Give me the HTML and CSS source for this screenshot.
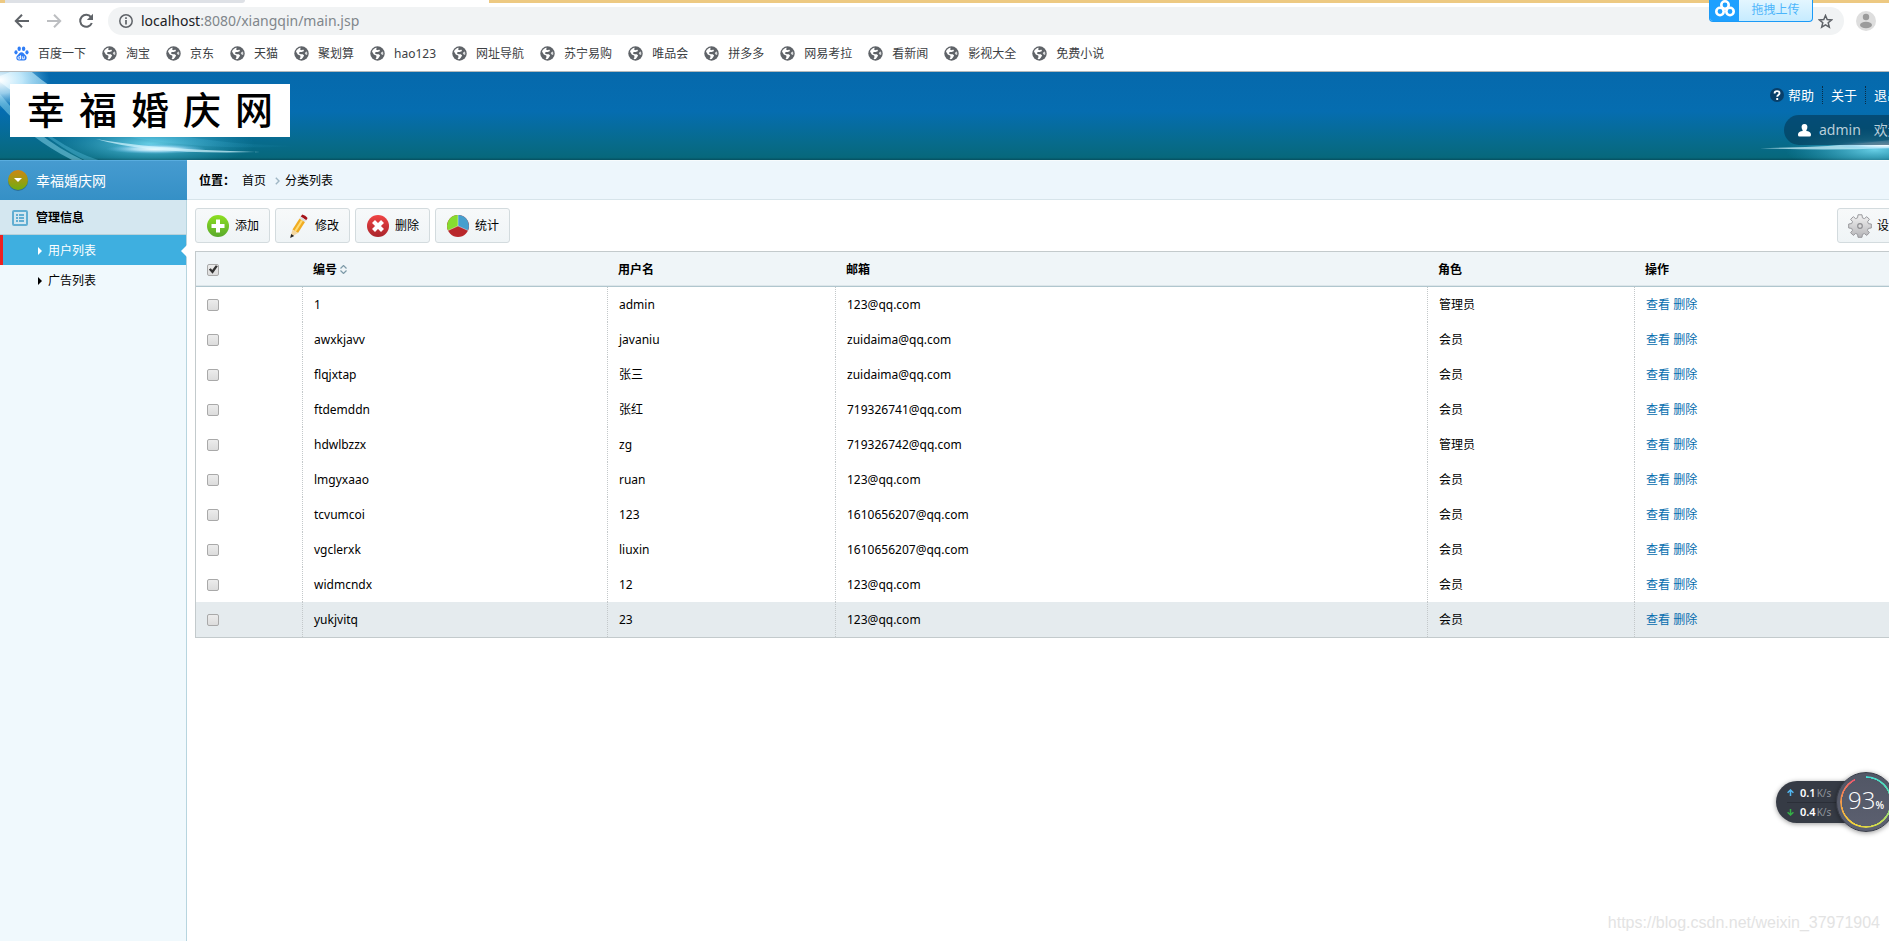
FILE: index.html
```html
<!DOCTYPE html>
<html lang="zh-CN">
<head>
<meta charset="utf-8">
<title>幸福婚庆网</title>
<link rel="stylesheet" href="styles.css">
<script src="main.js" defer></script>
</head>
<body>
<svg class="defs" aria-hidden="true">
  <symbol id="globe" viewBox="0 0 15 15">
    <circle cx="7.500" cy="7.500" r="7.200" fill="#5f6368"/>
    <path d="M2 5.600C2.800 3.400 4.600 2 6.800 1.800L6 3.600l1.800.6 1.400-.6.900 1.300-2.300 1L5.600 6l-.7 1.600 1.900.6 2 .1 1.300 1.300-1 1.600-1.300 1.800c-.8.2-1.500.2-2.200 0l.9-1.900-.3-1.700-2.400-.9z" fill="#fff"/>
    <path d="M12.900 5.500l-1.600.7-.5 1.500 1.300 1.100 1 .1c.4-1.200.3-2.300-.2-3.400z" fill="#fff" opacity=".75"/>
  </symbol>
  <symbol id="lens" viewBox="0 0 300 88">
    <path d="M-5 6C50 52 140 82 300 74C160 72 80 44 25-6z" fill="url(#streak)"/>
    <path d="M0 22Q38 70 92 92L80 92Q26 66-6 26z" fill="#8fdcf0" opacity=".5"/>
    <path d="M15 32Q56 78 112 92L92 92Q40 66 8 28z" fill="#5fc4e0" opacity=".4"/>
    <ellipse cx="0" cy="8" rx="50" ry="30" fill="url(#glow)"/>
    <ellipse cx="150" cy="72" rx="105" ry="24" fill="url(#flare)"/>
    <ellipse cx="156" cy="77" rx="50" ry="5" fill="url(#glow)"/>
    <path d="M96 67Q150 77 260 80Q150 83 96 67z" fill="#d6f7ff" opacity=".7"/>
  </symbol>
  <symbol id="lens-end" viewBox="0 0 170 88">
    <ellipse cx="125" cy="78" rx="90" ry="22" fill="url(#flare)"/>
    <path d="M10 76Q90 76 170 64V74Q90 80 10 76z" fill="#d6f7ff" opacity=".7"/>
    <ellipse cx="135" cy="73" rx="50" ry="5" fill="url(#glow)"/>
  </symbol>
  <defs>
    <radialGradient id="glow"><stop offset="0" stop-color="#fff"/><stop offset=".45" stop-color="#c9eeff" stop-opacity=".75"/><stop offset="1" stop-color="#5cb8ea" stop-opacity="0"/></radialGradient>
    <radialGradient id="flare"><stop offset="0" stop-color="#71d9ef" stop-opacity=".9"/><stop offset="1" stop-color="#2da0c4" stop-opacity="0"/></radialGradient>
    <linearGradient id="streak"><stop offset="0" stop-color="#e8f8ff" stop-opacity=".9"/><stop offset=".4" stop-color="#43b0dc" stop-opacity=".5"/><stop offset="1" stop-color="#2da0c4" stop-opacity="0"/></linearGradient>
    <linearGradient id="green" x2="0" y2="1"><stop offset="0" stop-color="#8ddf21"/><stop offset="1" stop-color="#59a92c"/></linearGradient>
    <linearGradient id="red" x2="0" y2="1"><stop offset="0" stop-color="#f04444"/><stop offset="1" stop-color="#a9242b"/></linearGradient>
    <linearGradient id="steel" x2="0" y2="1"><stop offset="0" stop-color="#f3f3f3"/><stop offset="1" stop-color="#b5b5b8"/></linearGradient>
    <linearGradient id="orb" x2="0" y2="1"><stop offset="0" stop-color="#cf8613"/><stop offset="1" stop-color="#6fae12"/></linearGradient>
  </defs>
</svg>

<header class="browser">
  <div class="tabs"><span class="tab tab-idle"></span><span class="tab tab-active"></span></div>
  <div class="toolbar">
    <button class="nav" aria-label="后退"><svg width="16" height="16" viewBox="0 0 16 16"><path d="M15 8H2.500M8 1.800L1.800 8 8 14.200" fill="none" stroke="#5f6368" stroke-width="2"/></svg></button>
    <button class="nav" aria-label="前进"><svg width="16" height="16" viewBox="0 0 16 16"><path d="M1 8h12.500M8 1.800L14.200 8 8 14.200" fill="none" stroke="#bcbec1" stroke-width="2"/></svg></button>
    <button class="nav" aria-label="刷新"><svg width="16" height="16" viewBox="0 0 16 16"><path d="M13 4.200A6 6 0 1 0 13.800 10" fill="none" stroke="#5f6368" stroke-width="2"/><path d="M15 .8V7H8.800z" fill="#5f6368"/></svg></button>
    <div class="omnibox">
      <svg width="14" height="14" viewBox="0 0 14 14"><circle cx="7" cy="7" r="6.200" fill="none" stroke="#5f6368" stroke-width="1.500"/><path d="M7 6v4.500M7 3.300v1.700" stroke="#5f6368" stroke-width="1.700"/></svg>
      <span class="url"><b>localhost</b>:8080/xiangqin/main.jsp</span>
      <button class="nav" aria-label="收藏"><svg width="15" height="15" viewBox="0 0 15 15"><path d="M7.500 1.500l1.700 4.100 4.400.3-3.400 2.900 1.100 4.300-3.800-2.300-3.800 2.300 1.100-4.300L1.400 5.900l4.400-.3z" fill="none" stroke="#5f6368" stroke-width="1.500"/></svg></button>
    </div>
    <button class="nav avatar" aria-label="用户"><svg width="20" height="20" viewBox="0 0 20 20"><circle cx="10" cy="10" r="10" fill="#dedede"/><circle cx="10" cy="6" r="3.200" fill="#9b9b9b"/><ellipse cx="10" cy="14" rx="6" ry="3.200" fill="#9b9b9b"/></svg></button>
  </div>
  <nav class="bookmarks">
    <a href="#"><svg width="15" height="15" viewBox="0 0 15 15" fill="#2f7df6"><ellipse cx="5.200" cy="2.800" rx="1.700" ry="2.300"/><ellipse cx="9.600" cy="2.800" rx="1.700" ry="2.300"/><ellipse cx="2" cy="6.300" rx="1.600" ry="2.100"/><ellipse cx="13" cy="6.300" rx="1.600" ry="2.100"/><path d="M7.500 6.200c2 0 2.500 1.700 4 3.100 2 1.900 1.300 5.200-1.300 5.200H4.800c-2.600 0-3.300-3.300-1.300-5.200 1.500-1.400 2-3.100 4-3.100z"/><path d="M6.500 9.300v3.700H5a1 1 0 0 1 0-2.200h1.500M8.300 10.300v2.500h2v-2.500" fill="none" stroke="#fff" stroke-width=".9"/></svg>百度一下</a>
  </nav>
  <div class="upload"><span class="upload-mark"><svg width="20" height="17" viewBox="0 0 20 17" fill="none" stroke="#fff" stroke-width="2.600"><circle cx="10" cy="5" r="3.700"/><circle cx="5" cy="11.500" r="3.700"/><circle cx="15" cy="11.500" r="3.700"/></svg></span><span class="upload-text">拖拽上传</span></div>
</header>

<div class="page">
  <header class="banner">
    <svg class="lens lens-left"><use href="#lens"/></svg>
    <svg class="lens lens-right"><use href="#lens-end"/></svg>
    <h1 class="logo"><span>幸</span><span>福</span><span>婚</span><span>庆</span><span>网</span></h1>
    <div class="account">
      <ul class="links">
        <li><a href="#"><svg width="14" height="14" viewBox="0 0 14 14"><circle cx="7" cy="7" r="7" fill="#083f69"/><path d="M4.600 5.400C4.600 2.300 9.500 2.400 9.500 5.200 9.500 6.900 7.200 7 7.200 8.800M7.200 10v2" fill="none" stroke="#fff" stroke-width="1.900"/></svg>帮助</a></li>
        <li><a href="#">关于</a></li>
        <li><a href="#">退出</a></li>
      </ul>
      <div class="user"><svg width="13" height="13" viewBox="0 0 13 13" fill="#fff"><path d="M6.500 0C9 0 9.700 2 9.300 4 9 5.300 8.400 6 8.300 7c2.500.2 4.700 1 4.700 3.500V11q0 1.500-1.500 1.500h-10Q0 12.500 0 11v-.5C0 8 2.200 7.200 4.700 7c-.1-1-.7-1.700-1-3C3.300 2 4 0 6.500 0z"/></svg><span>admin</span><span>欢迎</span></div>
    </div>
  </header>

  <div class="body">
    <aside class="sidebar">
      <div class="side-top"><svg width="20" height="21" viewBox="0 0 20 21"><circle cx="10" cy="11" r="10" fill="#2c6f96"/><circle cx="10" cy="10" r="10" fill="url(#orb)"/><path d="M6 8h8l-4 4z" fill="#fff"/></svg>幸福婚庆网</div>
      <div class="side-title"><svg width="16" height="16" viewBox="0 0 16 16"><rect x="1" y="1" width="14" height="14" rx="1" fill="none" stroke="#62aed2" stroke-width="2"/><path d="M4 5h2M4 8h2M4 11h2M7 5h5M7 8h5M7 11h5" stroke="#62aed2" stroke-width="2"/></svg>管理信息</div>
      <nav class="menu">
        <a class="active" href="#">用户列表</a>
        <a href="#">广告列表</a>
      </nav>
    </aside>

    <main class="content">
      <div class="place"><b>位置：</b><a href="#">首页</a><svg width="5" height="8" viewBox="0 0 5 8"><path d="M.8.8L4 4 .8 7.200" fill="none" stroke="#9fb6c4" stroke-width="1.400"/></svg><a href="#">分类列表</a></div>
      <div class="tools">
        <button><svg width="24" height="24" viewBox="0 0 24 24"><circle cx="12" cy="12" r="11" fill="url(#green)"/><path d="M12 5.500v13M5.500 12h13" stroke="#fff" stroke-width="4"/></svg>添加</button>
        <button><svg width="24" height="24" viewBox="0 0 24 24"><path d="M13.500 4.500l5.500 3.600-7 11-5.500-3.600z" fill="#f0ac22"/><path d="M16 6.500L9.300 17" stroke="#ffdc73" stroke-width="2"/><path d="M14.700 2.600l5.500 3.600L21.600 4Q19.500 1.200 16.300.4z" fill="#a51219"/><path d="M13.500 4.500l5.500 3.600 1.200-1.900-5.500-3.600z" fill="#dcdcdc"/><path d="M6.500 15.500l5.500 3.600-6.800 3.900-.7-.4z" fill="#f3d7a2"/><path d="M5.200 20l3 1.900-4 2.100z" fill="#222"/></svg>修改</button>
        <button><svg width="24" height="24" viewBox="0 0 24 24"><circle cx="12" cy="12" r="11" fill="url(#red)"/><path d="M7.500 7.500l9 9M16.500 7.500l-9 9" stroke="#fff" stroke-width="4.200"/></svg>删除</button>
        <button><svg width="24" height="24" viewBox="0 0 24 24"><circle cx="12" cy="12" r="11" fill="#b9272b"/><path d="M12 12V1A11 11 0 0 0 2 16.500z" fill="#86dc2f"/><path d="M12 12V1A11 11 0 0 1 22 16.500z" fill="#469fce"/><path d="M12 1v11M12 12L2 16.500M12 12l10 4.500" stroke="#fff" stroke-opacity=".4"/></svg>统计</button>
        <button class="settings"><svg width="24" height="24" viewBox="0 0 24 24"><path d="M10 .8h4l.4 3 2 .8 2.400-1.900 2.600 2.600-1.800 2.400.8 2 2.900.3v4l-3 .4-.8 2 1.900 2.400-2.700 2.600-2.300-1.800-2 .8-.4 2.900h-4l-.4-3-2-.8-2.300 1.900-2.700-2.700 1.900-2.300-.8-2-3-.4v-4l3-.4.8-2-1.900-2.300 2.700-2.600L7.600 4.600l2-.8z" fill="url(#steel)" stroke="#98989c"/><circle cx="12" cy="12" r="2.300" fill="#ddd" stroke="#8e8e92" stroke-width="1.200"/></svg>设置</button>
      </div>
      <table class="list">
        <colgroup><col class="c-check"><col class="c-id"><col class="c-name"><col><col class="c-role"><col class="c-ops"></colgroup>
        <thead><tr><th><input type="checkbox" checked aria-label="全选"></th><th>编号<svg class="sort" width="7" height="9" viewBox="0 0 7 9"><path d="M.5 3.500l3-3 3 3M.5 5.500l3 3 3-3" fill="none" stroke="#7d9aa8" stroke-width="1.200"/></svg></th><th>用户名</th><th>邮箱</th><th>角色</th><th>操作</th></tr></thead>
        <tbody></tbody>
      </table>
    </main>
  </div>
</div>

<div class="speed">
  <div class="rates">
    <div><svg width="7" height="7" viewBox="0 0 7 7"><path d="M3.500 7V1M.6 3.800L3.500 1l2.900 2.800" fill="none" stroke="#52b7f2" stroke-width="1.500"/></svg><b>0.1</b>K/s</div>
    <div><svg width="7" height="7" viewBox="0 0 7 7"><path d="M3.500 0v6M.6 3.200L3.500 6l2.900-2.800" fill="none" stroke="#35b047" stroke-width="1.500"/></svg><b>0.4</b>K/s</div>
  </div>
  <div class="gauge"><span>93<small>%</small></span></div>
</div>
<div class="watermark">https://blog.csdn.net/weixin_37971904</div>
</body>
</html>
```

FILE: main.js
```js
const bookmarks = ['淘宝', '京东', '天猫', '聚划算', 'hao123', '网址导航', '苏宁易购', '唯品会', '拼多多', '网易考拉', '看新闻', '影视大全', '免费小说'];
document.querySelector('.bookmarks').insertAdjacentHTML('beforeend', bookmarks.map(name =>
  `<a href="#"><svg width="15" height="15"><use href="#globe"/></svg>${name}</a>`).join(''));

const users = [
  ['1', 'admin', '123@qq.com', '管理员'],
  ['awxkjavv', 'javaniu', 'zuidaima@qq.com', '会员'],
  ['flqjxtap', '张三', 'zuidaima@qq.com', '会员'],
  ['ftdemddn', '张红', '719326741@qq.com', '会员'],
  ['hdwlbzzx', 'zg', '719326742@qq.com', '管理员'],
  ['lmgyxaao', 'ruan', '123@qq.com', '会员'],
  ['tcvumcoi', '123', '1610656207@qq.com', '会员'],
  ['vgclerxk', 'liuxin', '1610656207@qq.com', '会员'],
  ['widmcndx', '12', '123@qq.com', '会员'],
  ['yukjvitq', '23', '123@qq.com', '会员']
];
document.querySelector('.list tbody').innerHTML = users.map(user =>
  `<tr><td><input type="checkbox" aria-label="选择 ${user[0]}"></td>${user.map(v => `<td>${v}</td>`).join('')}<td><a href="#">查看</a> <a href="#">删除</a></td></tr>`).join('');
```

FILE: styles.css
```css
* { box-sizing: border-box; }
html, body { height: 100%; }
body {
  margin: 0;
  display: flex;
  flex-direction: column;
  overflow: hidden;
  position: relative;
  background: #fff;
  color: #000;
  font: 12px/18px "Noto Sans", "Noto Sans CJK SC", sans-serif;
}
a { color: inherit; text-decoration: none; }
svg { flex: none; display: block; }
button { font: inherit; color: inherit; cursor: pointer; }
.defs { position: absolute; width: 0; height: 0; }

/* browser chrome */
.browser { flex: none; position: relative; border-bottom: 1px solid #b4b9bb; }
.tabs { display: flex; height: 3px; background: #edc982; }
.tab-idle { width: 240px; margin-left: 5px; background: #dee1e6; border-radius: 0 0 6px 0; box-shadow: 6px 0 0 #fff; }
.tab-active { width: 244px; background: #fff; }
.toolbar { display: flex; align-items: center; gap: 16px; padding: 4px 13px 0 14px; }
.nav { flex: none; padding: 0; border: 0; background: none; }
.omnibox {
  flex: 1;
  display: flex;
  align-items: center;
  gap: 8px;
  height: 28px;
  margin-left: -2px;
  padding: 0 11px;
  border-radius: 14px;
  background: #f1f3f4;
}
.url { flex: 1; color: #80868b; font-size: 14px; }
.url b { font-weight: 400; color: #202124; }
.avatar { margin-left: -4px; }
.bookmarks { display: flex; align-items: center; gap: 16px; height: 36px; padding: 1px 0 0 14px; color: #3c4043; }
.bookmarks a { display: flex; align-items: center; gap: 9px; }
.upload {
  position: absolute;
  top: 0;
  right: 76px;
  display: flex;
  height: 22px;
  width: 104px;
  border: 1px solid #1b9af7;
  border-top: 0;
  border-radius: 0 0 4px 4px;
  background: linear-gradient(#e3f6ff, #c6ebff);
  overflow: hidden;
}
.upload-mark { width: 29px; padding: 0 0 0 5px; background: #1ea0ff; }
.upload-text { flex: 1; text-align: center; color: #4cb5fb; line-height: 19px; }

/* the admin page runs past the right edge of the window */
.page { flex: 1; display: flex; flex-direction: column; width: calc(100% + 31px); }
.banner {
  position: relative;
  display: flex;
  justify-content: space-between;
  align-items: flex-start;
  height: 88px;
  background: linear-gradient(#0669ac 0%, #056db0 45%, #076b8c 80%, #07687c 97%, #064f60 100%);
  overflow: hidden;
}
.lens { position: absolute; top: 0; height: 88px; }
.lens-left { left: 0; width: 300px; }
.lens-right { right: 0; width: 170px; }
.logo {
  position: relative;
  display: flex;
  justify-content: center;
  gap: 14px;
  margin: 12px 0 0 10px;
  width: 280px;
  height: 53px;
  background: #fff;
  font: 500 38px/48px "Noto Sans CJK SC", sans-serif;
}
.account { position: relative; margin-right: 12px; }
.links { display: flex; justify-content: flex-end; margin: 14px 0 0; padding: 0; list-style: none; color: #fff; font-size: 13px; }
.links li { padding: 0 8px; }
.links li + li { border-left: 1px dotted #0a2c45; }
.links a { display: flex; align-items: center; gap: 4px; }
.user {
  display: flex;
  align-items: center;
  gap: 8px;
  width: 124px;
  height: 30px;
  margin: 11px 0 0 auto;
  padding: 0 6px 0 14px;
  border-radius: 15px;
  background: rgba(4, 55, 85, .6);
  color: #b8ceda;
  font-size: 14px;
  white-space: nowrap;
}
.user span + span { margin-left: 5px; }

.body { flex: 1; display: flex; }
.sidebar { width: 187px; border-right: 1px solid #b7d5df; background: #f0f9fd; }
.side-top, .side-title { display: flex; align-items: center; }
.side-top {
  gap: 8px;
  height: 40px;
  margin-right: -1px;
  padding-left: 8px;
  border-top: 1px solid #59addf;
  background: linear-gradient(#469bd0, #3590c6);
  color: #fff;
  font-size: 14px;
}
.side-title {
  gap: 8px;
  height: 35px;
  padding: 2px 0 0 12px;
  border-bottom: 1px solid #b7d1da;
  background: #d4e7f0;
  font-weight: 700;
}
.menu a { position: relative; display: flex; align-items: center; gap: 6px; height: 30px; padding: 1px 0 0 38px; }
.menu a::before { content: ""; border: 4px solid transparent; border-left-color: currentColor; border-right: 0; }
.menu .active { border-left: 3px solid #ec2121; padding-left: 35px; background: #3eafe0; color: #fff; }
.menu .active::after { content: ""; position: absolute; right: -1px; border: 6px solid transparent; border-right-color: #fff; border-left: 0; }

.content { flex: 1; min-width: 0; }
.place { display: flex; align-items: center; height: 40px; padding: 1px 0 0 12px; border-top: 1px solid #f7fbfd; border-bottom: 1px solid #d7e4ea; background: #edf6fc; }
.place b { margin-right: 7px; }
.place svg { margin: 0 5px 0 9px; }
.tools { display: flex; gap: 5px; padding: 8px; }
.tools button {
  display: flex;
  align-items: center;
  gap: 5px;
  width: 75px;
  height: 35px;
  padding: 0 0 0 10px;
  border: 1px solid #d3dbde;
  border-radius: 3px;
  background: linear-gradient(#f7f9fa, #eff4f6);
}
.tools .settings { margin-left: auto; }

.list { width: calc(100% - 16px); margin-left: 8px; table-layout: fixed; border-collapse: separate; border-spacing: 0; border: 1px solid #c3cacc; }
.c-check { width: 106px; }
.c-id { width: 305px; }
.c-name { width: 228px; }
.c-role { width: 207px; }
.c-ops { width: 277px; }
.list th, .list td { height: 35px; padding: 1px 0 0 11px; text-align: left; }
.list th { background: #eff5f8; border-bottom: 1px solid #b0c6ce; box-shadow: inset 0 -1px #dde6ea; }
.list td + td { border-left: 1px dotted #c3c8ca; }
.list td a { color: #056dae; }
.list tbody tr:last-child { background: #e5ebee; }
.sort { display: inline-block; margin-left: 3px; }
.list input {
  display: block;
  appearance: none;
  width: 12px;
  height: 12px;
  margin: 0;
  border: 1px solid #a9a9a9;
  border-radius: 2px;
  background: linear-gradient(#ececec, #dcdcdc);
}
.list input:checked::before {
  content: "";
  display: block;
  height: 10px;
  background: #333;
  clip-path: polygon(8% 50%, 28% 38%, 42% 56%, 78% 8%, 98% 18%, 46% 92%);
}

/* desktop overlays */
.speed { position: absolute; right: -7px; bottom: 109px; display: flex; align-items: center; }
.rates {
  width: 90px;
  margin-right: -30px;
  padding: 2px 0 2px 11px;
  border-radius: 21px 0 0 21px;
  background: #363b45;
  box-shadow: 0 1px 5px rgba(0, 0, 0, .4);
  color: #8f949c;
  font-size: 10px;
}
.rates div { display: flex; align-items: center; height: 19px; }
.rates div + div { border-top: 1px solid #2b2f38; }
.rates b { margin: 0 1px 0 6px; color: #fff; font-size: 11px; font-weight: 600; }
.gauge {
  position: relative;
  display: flex;
  align-items: center;
  justify-content: center;
  width: 60px;
  height: 60px;
  border-radius: 50%;
  background: linear-gradient(#515665, #5c6070);
  border: 1px solid #383c47;
  box-shadow: 0 1px 5px rgba(0, 0, 0, .4);
  color: #fff;
  font: 300 24px/30px "Open Sans", sans-serif;
}
.gauge::before {
  content: "";
  position: absolute;
  inset: 3px;
  border-radius: 50%;
  background: conic-gradient(#46ddd6 0%, #57dcae 20%, #c9df51 40%, #f4cf3a 60%, #f49a49 75%, #ee5570 93%, transparent 93%);
  mask: radial-gradient(closest-side, transparent 92%, #000 93%);
}
.gauge small { font-size: 10px; font-weight: 600; }
.watermark { position: absolute; right: 9px; bottom: 9px; color: #e3e3e3; font: 16px/18px "Liberation Sans", sans-serif; }
```
